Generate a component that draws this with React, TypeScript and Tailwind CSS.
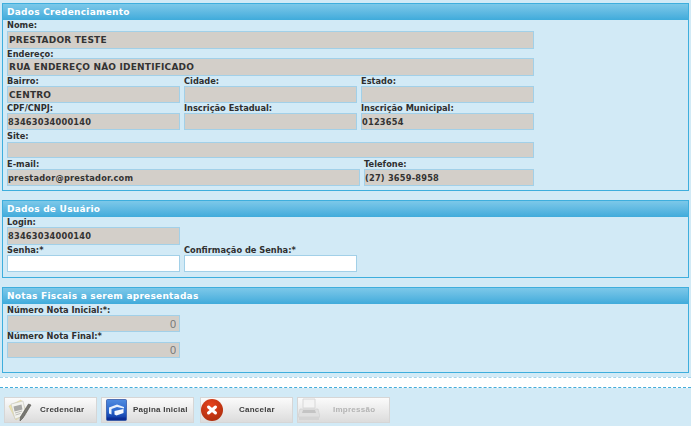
import React from 'react'

const fontCls = "font-['DejaVu_Sans',sans-serif]"

function Panel({ title, className, children }: { title: string; className: string; children: React.ReactNode }) {
  return (
    <section className={`mx-[2px] border border-[#3eaedd] ${className}`}>
      <h2 className="h-[16px] bg-gradient-to-b from-[#7cc8e9] to-[#3fabdb] pl-[4px] text-[9px] leading-[17px] font-bold tracking-[0.25px] text-white">
        {title}
      </h2>
      <div className="pl-[4px]">{children}</div>
    </section>
  )
}

function Field({
  label,
  value = '',
  width,
  labelH,
  inputH,
  disabled = true,
  number = false,
  caps = false,
}: {
  label: string
  value?: string
  width: string
  labelH: string
  inputH: string
  disabled?: boolean
  number?: boolean
  caps?: boolean
}) {
  return (
    <div className={width}>
      <label className={`block ${labelH} text-[8.25px] font-bold whitespace-nowrap text-[#2f2f2f]`}>{label}</label>
      <input
        readOnly
        value={value}
        className={`block w-full ${inputH} border border-[#a2d0e8] outline-none ${
          disabled ? 'bg-[#d3cfc9]' : 'bg-white'
        } ${
          number
            ? "px-[3px] text-right font-['Liberation_Sans',sans-serif] text-[11px] font-normal text-[#777]"
            : caps
              ? 'pl-[1px] text-[9px] font-bold tracking-[0.2px] text-[#333]'
              : 'pl-[0px] text-[8.25px] font-bold tracking-[0.2px] text-[#333]'
        }`}
      />
    </div>
  )
}

function CredIcon() {
  return (
    <svg width="24" height="23" viewBox="0 0 24 23">
      <path d="M1 7 13 1l6 12-11 8z" fill="#f1e6a8" stroke="#d6cf9f" strokeWidth=".6" />
      <path d="M3 5 15 2l3 14-11 4z" fill="#f3f3ee" stroke="#c4c4c0" strokeWidth=".6" />
      <path d="M5.500 7.500l8-2 1 5-8 2z" fill="#a8a8a6" />
      <path d="M7 14l7-2M7.500 16l5-1.500" stroke="#b5b5b2" strokeWidth=".9" />
      <path d="M23 6 15 19l-3 3 .4-4L20.500 5z" fill="#777772" stroke="#55544f" strokeWidth=".6" />
    </svg>
  )
}

function HomeIcon() {
  return (
    <svg width="21" height="22" viewBox="0 0 21 22">
      <defs>
        <linearGradient id="hb" x1="0" y1="0" x2="0" y2="1">
          <stop offset="0" stopColor="#4f8be0" />
          <stop offset=".55" stopColor="#2a66cc" />
          <stop offset="1" stopColor="#0a2f9c" />
        </linearGradient>
      </defs>
      <rect x=".5" y=".5" width="20" height="21" rx="1" fill="url(#hb)" stroke="#2a4da0" strokeWidth=".7" />
      <path d="M3 8.500 11 5.500l7 2.500v1.500l-7-1.500-5.500 2v5.500L3 14.500z" fill="#e9f1fc" />
      <path d="M8.500 12 17.500 10v4l-7 2.500-2-1z" fill="#f5f8fe" />
      <path d="M1 18.500h19V21H1z" fill="#0b2a90" opacity=".7" />
    </svg>
  )
}

function CancelIcon() {
  return (
    <svg width="22" height="22" viewBox="0 0 22 22">
      <defs>
        <radialGradient id="cr" cx=".45" cy=".3" r=".8">
          <stop offset="0" stopColor="#e8431c" />
          <stop offset="1" stopColor="#a82c0c" />
        </radialGradient>
      </defs>
      <circle cx="11" cy="11" r="11" fill="url(#cr)" />
      <path d="m7.500 8 7 6m0-6-7 6" stroke="#fff" strokeWidth="3" strokeLinecap="round" />
    </svg>
  )
}

function PrintIcon() {
  return (
    <svg width="22" height="24" viewBox="0 0 22 24">
      <path d="M5 1h12v9H5z" fill="#f4f4f4" stroke="#d8d8d8" />
      <path d="M2 11h18l2 8H0z" fill="#e0e0e0" stroke="#cdcdcd" strokeWidth=".6" />
      <path d="M5 12h12l1 3H4z" fill="#c4c4c4" />
      <path d="M1 19h20v3H1z" fill="#d4d4d4" />
    </svg>
  )
}

function ActionButton({
  icon,
  label,
  iconBox,
  faded = false,
}: {
  icon: React.ReactNode
  label: string
  iconBox: string
  faded?: boolean
}) {
  return (
    <button
      type="button"
      className="flex h-[26px] w-[93px] items-center border border-[#d6d6d6] bg-gradient-to-b from-[#fbfbfb] to-[#dcdcdc]"
    >
      <span className={`flex ${iconBox} shrink-0 blur-[0.4px]`}>{icon}</span>
      <span
        className={`font-['Liberation_Sans',sans-serif] text-[8px] font-bold tracking-[0.25px] whitespace-nowrap blur-[0.3px] ${
          faded ? 'text-[#b4b4b4]' : 'text-[#3c3c3c]'
        }`}
      >
        {label}
      </span>
    </button>
  )
}

export default function App() {
  return (
    <div className={`h-[426px] w-[691px] overflow-hidden bg-[#d2eaf6] pt-[3px] ${fontCls}`}>
      <Panel title="Dados Credenciamento" className="h-[188px]">
        <Field label="Nome:" value="PRESTADOR TESTE" caps width="w-[527px]" labelH="h-[11px] leading-[11px]" inputH="h-[18px]" />
        <Field label="Endereço:" value="RUA ENDEREÇO NÃO IDENTIFICADO" caps width="w-[527px]" labelH="h-[9px] leading-[10px]" inputH="h-[18px]" />
        <div className="flex gap-[4px]">
          <Field label="Bairro:" value="CENTRO" caps width="w-[173px]" labelH="h-[10px] leading-[11px]" inputH="h-[17px]" />
          <Field label="Cidade:" width="w-[173px]" labelH="h-[10px] leading-[11px]" inputH="h-[17px]" />
          <Field label="Estado:" width="w-[173px]" labelH="h-[10px] leading-[11px]" inputH="h-[17px]" />
        </div>
        <div className="flex gap-[4px]">
          <Field label="CPF/CNPJ:" value="83463034000140" width="w-[173px]" labelH="h-[10px] leading-[11px]" inputH="h-[17px]" />
          <Field label="Inscrição Estadual:" width="w-[173px]" labelH="h-[10px] leading-[11px]" inputH="h-[17px]" />
          <Field label="Inscrição Municipal:" value="0123654" width="w-[173px]" labelH="h-[10px] leading-[11px]" inputH="h-[17px]" />
        </div>
        <Field label="Site:" width="w-[527px]" labelH="h-[12px] leading-[13px]" inputH="h-[16px]" />
        <div className="flex gap-[4px]">
          <Field label="E-mail:" value="prestador@prestador.com" width="w-[353px]" labelH="h-[11px] leading-[13px]" inputH="h-[17px]" />
          <Field label="Telefone:" value="(27) 3659-8958" width="w-[170px]" labelH="h-[11px] leading-[13px]" inputH="h-[17px]" />
        </div>
      </Panel>

      <Panel title="Dados de Usuário" className="mt-[9px] h-[78px]">
        <Field label="Login:" value="83463034000140" width="w-[173px]" labelH="h-[10px] leading-[10px]" inputH="h-[18px]" />
        <div className="flex gap-[4px]">
          <Field label="Senha:*" width="w-[173px]" labelH="h-[10px] leading-[10px]" inputH="h-[17px]" disabled={false} />
          <Field label="Confirmação de Senha:*" width="w-[173px]" labelH="h-[10px] leading-[10px]" inputH="h-[17px]" disabled={false} />
        </div>
      </Panel>

      <Panel title="Notas Fiscais a serem apresentadas" className="mt-[9px] h-[86px]">
        <Field label="Número Nota Inicial:*:" value="0" width="w-[173px]" labelH="h-[11px] leading-[12px]" inputH="h-[17px]" number />
        <Field label="Número Nota Final:*" value="0" width="w-[173px]" labelH="h-[10px] leading-[9px]" inputH="h-[16px]" number />
      </Panel>

      <div className="mt-[4px] h-[11px] border-y border-dashed bg-white [border-top-color:#a6d6ec] [border-bottom-color:#45addb]" />

      <div className="mt-[9px] flex pl-[4px]">
        <ActionButton icon={<CredIcon />} label="Credenciar" iconBox="w-[35px] pl-[3px]" />
        <div className="w-[4px]" />
        <ActionButton icon={<HomeIcon />} label="Pagina Inicial" iconBox="w-[31px] pl-[4px]" />
        <div className="w-[6px]" />
        <ActionButton icon={<CancelIcon />} label="Cancelar" iconBox="w-[38px]" />
        <div className="w-[4px]" />
        <ActionButton icon={<PrintIcon />} label="Impressão" iconBox="w-[35px]" faded />
      </div>
    </div>
  )
}
